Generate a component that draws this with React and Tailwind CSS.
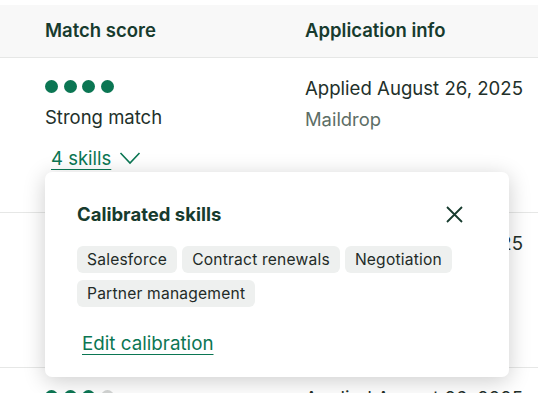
import React from "react";

const skills = ["Salesforce", "Contract renewals", "Negotiation", "Partner management"];

function Dots({ filled }) {
  return (
    <div className="flex gap-[5.5px]">
      {[0, 1, 2, 3].map((i) => (
        <span
          key={i}
          className={
            i < filled
              ? "block h-[13px] w-[13px] rounded-full bg-[#0b7653]"
              : "block h-[13px] w-[13px] rounded-full bg-[#d4d6d5]"
          }
        />
      ))}
    </div>
  );
}

function Row({ filled, label, date, source }) {
  return (
    <div className="flex h-[155px] border-b border-[#e6e7e6]">
      <div className="w-[305px] shrink-0 pl-[45px] pt-[22px]">
        <Dots filled={filled} />
        <div className="mt-[12px] text-[18.5px] leading-[24px] text-[#22302a]">{label}</div>
        <div className="mt-[17px] flex items-center gap-[8px] pl-[6px]">
          <span className="text-[18.5px] leading-[24px] text-[#0b7653] underline underline-offset-[4px] decoration-[1px]">
            4 skills
          </span>
          <svg width="22" height="14" viewBox="0 0 22 14" fill="none">
            <path d="M1.5 2 L11 12 L20.5 2" stroke="#0b7653" strokeWidth="1.6" />
          </svg>
        </div>
      </div>
      <div className="flex-1 pt-[18px]">
        <div className="whitespace-nowrap text-[18.6px] leading-[24px] text-[#22302a]">{date}</div>
        <div className="mt-[7px] text-[18.4px] leading-[24px] text-[#5d6e66]">{source}</div>
      </div>
    </div>
  );
}

export default function App() {
  return (
    <div
      className="relative h-[393px] w-[538px] overflow-hidden bg-white pt-[5px]"
      style={{ fontFamily: "Inter, 'Noto Sans', sans-serif" }}
    >
      <div className="flex h-[53px] items-center border-b border-[#e6e7e6] bg-[#f8f8f8] text-[18.5px] font-semibold text-[#173b2e]">
        <div className="w-[305px] shrink-0 pl-[45px]">Match score</div>
        <div className="flex-1">Application info</div>
      </div>

      <Row filled={4} label="Strong match" date="Applied August 26, 2025" source="Maildrop" />
      <Row filled={4} label="Strong match" date="Applied August 26, 2025" source="Indeed" />
      <Row filled={3} label="Good match" date="Applied August 26, 2025" source="Indeed" />

      <div className="absolute left-[45px] top-[172px] h-[205px] w-[464px] rounded-[7px] bg-white pl-[32px] pr-[32px] pt-[28px] shadow-[0_4px_22px_rgba(0,0,0,0.2)]">
        <div className="flex items-center justify-between">
          <h2 className="text-[18.5px] font-bold leading-[28px] text-[#173b2e]">Calibrated skills</h2>
          <svg width="17" height="17" viewBox="0 0 17 17" fill="none" className="mr-[14px]">
            <path d="M1 1 L16 16 M16 1 L1 16" stroke="#173b2e" strokeWidth="1.8" />
          </svg>
        </div>
        <div className="mt-[18px] flex flex-wrap gap-x-[5px] gap-y-[7px]">
          {skills.map((s) => (
            <span
              key={s}
              className="flex h-[27px] items-center rounded-[6px] bg-[#eef0ef] px-[10px] text-[15.6px] tracking-[0.2px] text-[#232b27]"
            >
              {s}
            </span>
          ))}
        </div>
        <div className="mt-[25px] pl-[5px]">
          <span className="text-[18.8px] leading-[24px] text-[#0b7653] underline underline-offset-[4px] decoration-[1px]">
            Edit calibration
          </span>
        </div>
      </div>
    </div>
  );
}
